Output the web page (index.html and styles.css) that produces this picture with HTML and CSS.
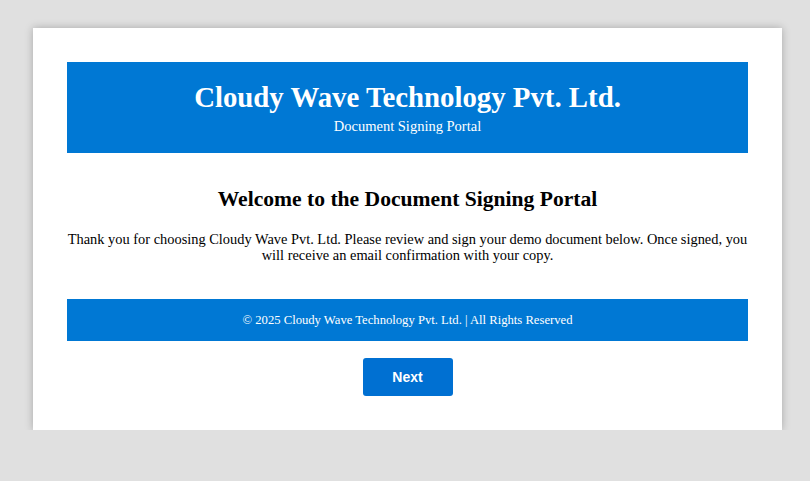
FILE: index.html
```html
<!DOCTYPE html>
<html>
<head>
<meta charset="utf-8">
<link rel="stylesheet" href="styles.css">
</head>
<body>
<div class="card">
  <header class="banner">
    <h1 class="banner-title">Cloudy Wave Technology Pvt. Ltd.</h1>
    <p class="banner-sub">Document Signing Portal</p>
  </header>
  <section class="intro">
    <h2 class="intro-title">Welcome to the Document Signing Portal</h2>
    <p class="intro-text">Thank you for choosing Cloudy Wave Pvt. Ltd. Please review and sign your demo document below. Once signed, you will receive an email confirmation with your copy.</p>
  </section>
  <footer class="foot">© 2025 Cloudy Wave Technology Pvt. Ltd. | All Rights Reserved</footer>
  <div class="actions">
    <button class="next-btn">Next</button>
  </div>
</div>
</body>
</html>
```
FILE: styles.css
```css
html, body {
  margin: 0;
  padding: 0;
  background: #e0e0e0;
  font-family: "Liberation Serif", "Times New Roman", serif;
}
body {
  padding: 28px 28px 0 33px;
}
.card {
  width: 749px;
  box-sizing: border-box;
  background: #fff;
  padding: 34px 34px 34px 34px;
  box-shadow: 0 0 8px rgba(0,0,0,0.25);
}
.banner {
  background: #0078d4;
  color: #fff;
  text-align: center;
  padding: 18px 10px 19px;
}
.banner-title {
  margin: 0;
  font-size: 28.8px;
  line-height: 34px;
  font-weight: bold;
}
.banner-sub {
  margin: 4px 0 0;
  font-size: 14.5px;
  line-height: 16px;
}
.intro {
  text-align: center;
  padding: 33px 0 0;
}
.intro-title {
  margin: 0;
  font-size: 21.6px;
  line-height: 26px;
  font-weight: bold;
}
.intro-text {
  margin: 19px 0 0;
  font-size: 14.4px;
  line-height: 16px;
}
.foot {
  margin-top: 36px;
  background: #0078d4;
  color: #fff;
  text-align: center;
  font-size: 12.65px;
  height: 42px;
  display: flex;
  align-items: center;
  justify-content: center;
}
.actions {
  display: flex;
  justify-content: center;
  margin-top: 17px;
}
.next-btn {
  width: 90px;
  height: 38px;
  background: #0070d2;
  color: #fff;
  border: none;
  border-radius: 3px;
  font-family: "Liberation Sans", Arial, sans-serif;
  font-weight: bold;
  font-size: 14px;
}
```
